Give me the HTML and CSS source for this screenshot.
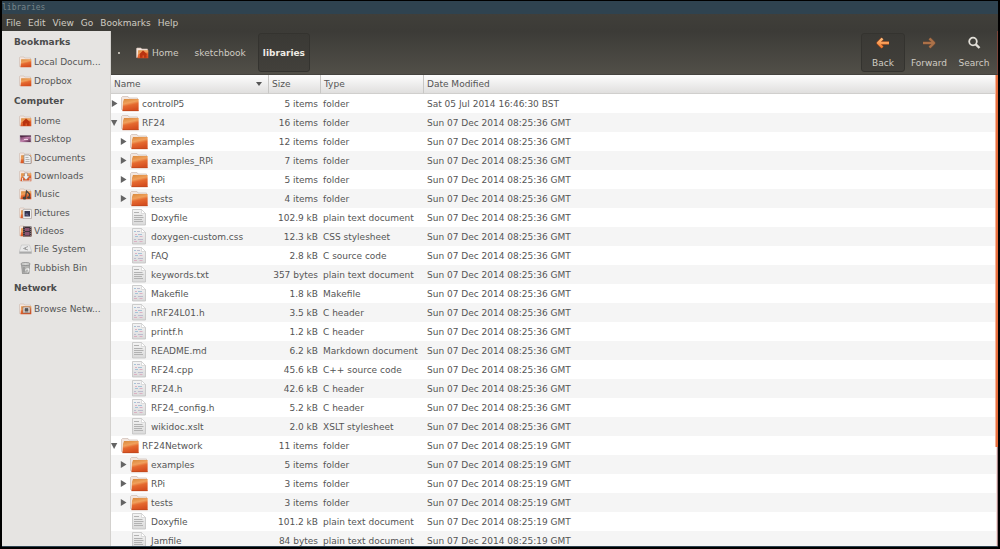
FILE: index.html
```html
<!DOCTYPE html>
<html lang="en">
<head>
<meta charset="utf-8">
<title>libraries</title>
<link rel="stylesheet" href="styles.css">
</head>
<body>
<svg class="defs" aria-hidden="true">
  <defs>
    <linearGradient id="orange" x1="0" y1="0" x2="0.3" y2="1"><stop offset="0" stop-color="#d88a3c"/><stop offset="0.4" stop-color="#f0a05c"/><stop offset="0.6" stop-color="#e56a30"/><stop offset="1" stop-color="#d64f20"/></linearGradient>
    <linearGradient id="paper" x1="0" y1="0" x2="0" y2="1"><stop offset="0" stop-color="#f4f4f4"/><stop offset="1" stop-color="#dadada"/></linearGradient>
    <linearGradient id="arrow" x1="0" y1="0" x2="0" y2="1"><stop offset="0" stop-color="#ffc080"/><stop offset="1" stop-color="#f27a2c"/></linearGradient>
    <linearGradient id="dusk" x1="0" y1="0" x2="1" y2="1"><stop offset="0" stop-color="#4a1c3c"/><stop offset="0.5" stop-color="#c283ad"/><stop offset="1" stop-color="#3b1430"/></linearGradient>
  </defs>
  <symbol id="folder" viewBox="0 0 20 19">
    <path d="M1.500 15.500V3.500L2.500 2.500H8l1 1.500h8.500V15.500z" fill="#f3e6df" stroke="#cdbcb3" stroke-width=".7"/>
    <path d="M4 5H18.600V17H2.500L3 8z" fill="url(#orange)"/>
    <path d="M2.500 16.700H18.600" stroke="#b8461c" stroke-width=".7"/>
  </symbol>
  <symbol id="text" viewBox="0 0 20 19">
    <path d="M3.500 1.500H12.500L16.500 5.500V17H3.500z" fill="url(#paper)" stroke="#c2c2c2" stroke-width=".8"/>
    <path d="M12.500 1.500V5.500H16.500z" fill="#fff" stroke="#cacaca" stroke-width=".6"/>
    <path d="M5 4.500h5M5 7.500h8.500M5 9.500h9.500M5 11.500h8M5 13.500h9" stroke="#b2b2b2" stroke-width="1"/>
  </symbol>
  <symbol id="code" viewBox="0 0 20 19">
    <path d="M3.500 1.500H12.500L16.500 5.500V17H3.500z" fill="url(#paper)" stroke="#c2c2c2" stroke-width=".8"/>
    <path d="M12.500 1.500V5.500H16.500z" fill="#fff" stroke="#cacaca" stroke-width=".6"/>
    <path d="M5 4.500h2M9 7.500h4M6 9.500h3" stroke="#a6c3d8" stroke-width="1"/>
    <path d="M6 7.500h2M10.500 9.500h3M5 14.500h3M10.500 14.500h3" stroke="#dcb0c2" stroke-width="1"/>
    <path d="M8 4.500h3M5 12.500h2M9 12.500h5" stroke="#bcbccf" stroke-width="1"/>
  </symbol>
  <symbol id="small" viewBox="0 0 13 12">
    <path d="M.5 10.500V1.500L1 1H5l.7 1H11.500V10z" fill="#f5e6dd" stroke="#cdb9ae" stroke-width=".6"/>
    <path d="M2.200 3.200H12.300V11.300H1.500z" fill="url(#orange)"/>
  </symbol>
  <symbol id="home" viewBox="0 0 13 12">
    <use href="#small"/><path d="M7 3.500L11.500 7.500H10.500V10.800H8V8.500H6.500V10.800H4V7.500H3z" fill="#b8330f"/>
  </symbol>
  <symbol id="desktop" viewBox="0 0 13 12">
    <path d="M.8 2.500H12.200V9.500H.8z" fill="url(#dusk)" stroke="#e5dfe3" stroke-width=".8"/><path d="M1 3H12" stroke="#32132a"/><path d="M5 6.500h4" stroke="#f0cfe2"/>
  </symbol>
  <symbol id="documents" viewBox="0 0 13 12">
    <use href="#small"/><path d="M5 3h5l2 2v6.500H5z" fill="#eee" stroke="#8b8b8b" stroke-width=".7"/><path d="M6.500 5.500h3M6.500 7.500h4M6.500 9.500h4" stroke="#999" stroke-width=".7"/>
  </symbol>
  <symbol id="downloads" viewBox="0 0 13 12">
    <use href="#small"/><path d="M5.500 3h3v3h2L7 10 3.500 6h2z" fill="#f2f2f2" stroke="#8a7268" stroke-width=".5"/><path d="M3.500 8v3h7.500V8" fill="none" stroke="#ddd"/>
  </symbol>
  <symbol id="music" viewBox="0 0 13 12">
    <use href="#small"/><path d="M6.500 9.500L7.500 3L10.500 6V8.500" fill="none" stroke="#44423e" stroke-width="1.300"/><ellipse cx="5.500" cy="10" rx="1.900" ry="1.500" fill="#44423e"/><ellipse cx="9.800" cy="9.500" rx="1.600" ry="1.300" fill="#44423e"/>
  </symbol>
  <symbol id="pictures" viewBox="0 0 13 12">
    <use href="#small"/><path d="M4 2.500h8.500v9H4z" fill="#eee" stroke="#999" stroke-width=".5"/><path d="M5.500 4H11v5.500H5.500z" fill="#34344d"/><path d="M6 8l2-2 2 3z" fill="#66668b"/>
  </symbol>
  <symbol id="videos" viewBox="0 0 13 12">
    <use href="#small"/><path d="M4 1.500h8.500v10H4z" fill="#3c3036"/><path d="M6 3h4.500v3H6zM6 7h4.500v3.500H6z" fill="#8a536f"/><path d="M5 2v9M11.600 2v9" stroke="#bcaeb3" stroke-width=".6" stroke-dasharray="1 1"/>
  </symbol>
  <symbol id="drive" viewBox="0 0 13 12">
    <path d="M2.500 2H10.500L12.500 8V10.500H.5V8z" fill="#e9e9e9" stroke="#c0c0c0" stroke-width=".6"/><path d="M.5 8.500h12v2H.5z" fill="#aaa"/><path d="M9 3.500L4.500 5.500 9 7M6.500 4.500v2" fill="none" stroke="#8f8f8f" stroke-width=".8"/>
  </symbol>
  <symbol id="bin" viewBox="0 0 13 12">
    <path d="M2.500 2.500h8L10 11.700H3.500z" fill="#b4b4b2" stroke="#777" stroke-width=".6"/><ellipse cx="6.500" cy="2" rx="4.700" ry="1.500" fill="#d6d6d4" stroke="#777" stroke-width=".7"/><path d="M5 5v5.500" stroke="#858585"/><path d="M6.500 8.500a1.600 1.600 0 1 1 2 1.500M9 6l1 2" stroke="#fff" fill="none" stroke-width=".8"/>
  </symbol>
  <symbol id="network" viewBox="0 0 13 12">
    <use href="#small"/><path d="M4 4h7v6H4z" fill="#e7ded9" stroke="#8f6a5a" stroke-width=".6"/><path d="M6 5.500h3V8H6zM5.500 9h4" fill="#555" stroke="#555" stroke-width=".7"/>
  </symbol>
  <symbol id="closed" viewBox="0 0 9 9"><path d="M.8 1L6.500 4.500L.8 8z" fill="#646464"/></symbol>
  <symbol id="opened" viewBox="0 0 9 9"><path d="M0 2H6.300L3.100 8z" fill="#646464"/></symbol>
</svg>

<div class="window">
  <header class="titlebar">libraries</header>
  <nav class="menubar" aria-label="Menu">
    <button>File</button><button>Edit</button><button>View</button><button>Go</button><button>Bookmarks</button><button>Help</button>
  </nav>
  <div class="content">
    <aside class="sidebar">
      <h2>Bookmarks</h2>
      <ul class="places places-bookmarks">
        <li><a href="#"><svg><use href="#small"/></svg><span>Local Docum...</span></a></li>
        <li><a href="#"><svg><use href="#small"/></svg><span>Dropbox</span></a></li>
      </ul>
      <h2>Computer</h2>
      <ul class="places places-computer">
        <li><a href="#"><svg><use href="#home"/></svg><span>Home</span></a></li>
        <li><a href="#"><svg><use href="#desktop"/></svg><span>Desktop</span></a></li>
        <li><a href="#"><svg><use href="#documents"/></svg><span>Documents</span></a></li>
        <li><a href="#"><svg><use href="#downloads"/></svg><span>Downloads</span></a></li>
        <li><a href="#"><svg><use href="#music"/></svg><span>Music</span></a></li>
        <li><a href="#"><svg><use href="#pictures"/></svg><span>Pictures</span></a></li>
        <li><a href="#"><svg><use href="#videos"/></svg><span>Videos</span></a></li>
        <li><a href="#"><svg><use href="#drive"/></svg><span>File System</span></a></li>
        <li><a href="#"><svg><use href="#bin"/></svg><span>Rubbish Bin</span></a></li>
      </ul>
      <h2>Network</h2>
      <ul class="places places-network">
        <li><a href="#"><svg><use href="#network"/></svg><span>Browse Netw...</span></a></li>
      </ul>
    </aside>
    <main class="browser">
      <div class="toolbar">
        <nav class="path" aria-label="Path">
          <button class="path-scroll" aria-label="Earlier folders"><i></i></button>
          <button class="path-home"><svg><use href="#home"/></svg>Home</button>
          <button class="path-step">sketchbook</button>
          <button class="path-current">libraries</button>
        </nav>
        <div class="actions">
          <button class="action action-raised"><svg viewBox="0 0 16 16"><path d="M7.500 3.500L3 8l4.500 4.500M3.500 8H14" fill="none" stroke="#8f421c" stroke-width="3.600" stroke-linejoin="round"/><path d="M7.500 3.500L3 8l4.500 4.500M3.500 7.990L14 8.010" fill="none" stroke="url(#arrow)" stroke-width="2.400" stroke-linejoin="round"/></svg>Back</button>
          <button class="action action-forward"><svg viewBox="0 0 16 16"><path d="M8.500 3.500L13 8l-4.500 4.500M12.500 8H2" fill="none" stroke="#684a37" stroke-width="3.400" stroke-linejoin="round"/><path d="M8.500 3.500L13 8l-4.500 4.500M12.500 8H2" fill="none" stroke="#ab7148" stroke-width="2.200" stroke-linejoin="round"/></svg>Forward</button>
          <button class="action action-search"><svg viewBox="0 0 16 16"><circle cx="7" cy="6.500" r="3.800" fill="none" stroke="#e2dfd8" stroke-width="1.800"/><path d="M9.800 9.300L13.500 13" stroke="#e2dfd8" stroke-width="2.400"/></svg>Search</button>
        </div>
      </div>
      <div class="list">
        <table>
          <colgroup><col class="col-name"><col class="col-size"><col class="col-type"><col></colgroup>
          <thead><tr><th><button>Name<i class="sort"></i></button></th><th><button>Size</button></th><th><button>Type</button></th><th><button>Date Modified</button></th></tr></thead>
          <tbody>
            <tr><td><div class="name"><button aria-label="Expand"><svg><use href="#closed"/></svg></button><svg><use href="#folder"/></svg>controlP5</div></td><td>5 items</td><td>folder</td><td>Sat 05 Jul 2014 16:46:30 BST</td></tr>
            <tr><td><div class="name"><button aria-label="Collapse"><svg><use href="#opened"/></svg></button><svg><use href="#folder"/></svg>RF24</div></td><td>16 items</td><td>folder</td><td>Sun 07 Dec 2014 08:25:36 GMT</td></tr>
            <tr><td><div class="name nested"><button aria-label="Expand"><svg><use href="#closed"/></svg></button><svg><use href="#folder"/></svg>examples</div></td><td>12 items</td><td>folder</td><td>Sun 07 Dec 2014 08:25:36 GMT</td></tr>
            <tr><td><div class="name nested"><button aria-label="Expand"><svg><use href="#closed"/></svg></button><svg><use href="#folder"/></svg>examples_RPi</div></td><td>7 items</td><td>folder</td><td>Sun 07 Dec 2014 08:25:36 GMT</td></tr>
            <tr><td><div class="name nested"><button aria-label="Expand"><svg><use href="#closed"/></svg></button><svg><use href="#folder"/></svg>RPi</div></td><td>5 items</td><td>folder</td><td>Sun 07 Dec 2014 08:25:36 GMT</td></tr>
            <tr><td><div class="name nested"><button aria-label="Expand"><svg><use href="#closed"/></svg></button><svg><use href="#folder"/></svg>tests</div></td><td>4 items</td><td>folder</td><td>Sun 07 Dec 2014 08:25:36 GMT</td></tr>
            <tr><td><div class="name file"><svg><use href="#text"/></svg>Doxyfile</div></td><td>102.9 kB</td><td>plain text document</td><td>Sun 07 Dec 2014 08:25:36 GMT</td></tr>
            <tr><td><div class="name file"><svg><use href="#code"/></svg>doxygen-custom.css</div></td><td>12.3 kB</td><td>CSS stylesheet</td><td>Sun 07 Dec 2014 08:25:36 GMT</td></tr>
            <tr><td><div class="name file"><svg><use href="#code"/></svg>FAQ</div></td><td>2.8 kB</td><td>C source code</td><td>Sun 07 Dec 2014 08:25:36 GMT</td></tr>
            <tr><td><div class="name file"><svg><use href="#text"/></svg>keywords.txt</div></td><td>357 bytes</td><td>plain text document</td><td>Sun 07 Dec 2014 08:25:36 GMT</td></tr>
            <tr><td><div class="name file"><svg><use href="#code"/></svg>Makefile</div></td><td>1.8 kB</td><td>Makefile</td><td>Sun 07 Dec 2014 08:25:36 GMT</td></tr>
            <tr><td><div class="name file"><svg><use href="#code"/></svg>nRF24L01.h</div></td><td>3.5 kB</td><td>C header</td><td>Sun 07 Dec 2014 08:25:36 GMT</td></tr>
            <tr><td><div class="name file"><svg><use href="#code"/></svg>printf.h</div></td><td>1.2 kB</td><td>C header</td><td>Sun 07 Dec 2014 08:25:36 GMT</td></tr>
            <tr><td><div class="name file"><svg><use href="#text"/></svg>README.md</div></td><td>6.2 kB</td><td>Markdown document</td><td>Sun 07 Dec 2014 08:25:36 GMT</td></tr>
            <tr><td><div class="name file"><svg><use href="#code"/></svg>RF24.cpp</div></td><td>45.6 kB</td><td>C++ source code</td><td>Sun 07 Dec 2014 08:25:36 GMT</td></tr>
            <tr><td><div class="name file"><svg><use href="#code"/></svg>RF24.h</div></td><td>42.6 kB</td><td>C header</td><td>Sun 07 Dec 2014 08:25:36 GMT</td></tr>
            <tr><td><div class="name file"><svg><use href="#code"/></svg>RF24_config.h</div></td><td>5.2 kB</td><td>C header</td><td>Sun 07 Dec 2014 08:25:36 GMT</td></tr>
            <tr><td><div class="name file"><svg><use href="#text"/></svg>wikidoc.xslt</div></td><td>2.0 kB</td><td>XSLT stylesheet</td><td>Sun 07 Dec 2014 08:25:36 GMT</td></tr>
            <tr><td><div class="name"><button aria-label="Collapse"><svg><use href="#opened"/></svg></button><svg><use href="#folder"/></svg>RF24Network</div></td><td>11 items</td><td>folder</td><td>Sun 07 Dec 2014 08:25:19 GMT</td></tr>
            <tr><td><div class="name nested"><button aria-label="Expand"><svg><use href="#closed"/></svg></button><svg><use href="#folder"/></svg>examples</div></td><td>5 items</td><td>folder</td><td>Sun 07 Dec 2014 08:25:19 GMT</td></tr>
            <tr><td><div class="name nested"><button aria-label="Expand"><svg><use href="#closed"/></svg></button><svg><use href="#folder"/></svg>RPi</div></td><td>3 items</td><td>folder</td><td>Sun 07 Dec 2014 08:25:19 GMT</td></tr>
            <tr><td><div class="name nested"><button aria-label="Expand"><svg><use href="#closed"/></svg></button><svg><use href="#folder"/></svg>tests</div></td><td>3 items</td><td>folder</td><td>Sun 07 Dec 2014 08:25:19 GMT</td></tr>
            <tr><td><div class="name file"><svg><use href="#text"/></svg>Doxyfile</div></td><td>101.2 kB</td><td>plain text document</td><td>Sun 07 Dec 2014 08:25:19 GMT</td></tr>
            <tr><td><div class="name file"><svg><use href="#text"/></svg>Jamfile</div></td><td>84 bytes</td><td>plain text document</td><td>Sun 07 Dec 2014 08:25:19 GMT</td></tr>
          </tbody>
        </table>
        <div class="scroll"><div class="scroll-thumb"></div></div>
      </div>
    </main>
  </div>
</div>
</body>
</html>
```
FILE: styles.css
```css
* { box-sizing: border-box; }
body {
  margin: 0;
  height: 100vh;
  padding: 1px 2px 2px;
  overflow: hidden;
  background: #000;
  color: #555;
  font: 9px/12px "DejaVu Sans", sans-serif;
}
button {
  margin: 0;
  padding: 0;
  border: 0;
  background: none;
  color: inherit;
  font: inherit;
}
.defs { position: absolute; width: 0; height: 0; }
.window {
  display: flex;
  flex-direction: column;
  height: 100%;
  border-bottom: 1px solid #2f4350;
  background: #3c3b37;
}
.titlebar {
  flex: none;
  height: 13px;
  background: #2f4350;
  color: #77858a;
  font: 8px/13px "DejaVu Sans Mono", monospace;
}
.menubar {
  display: flex;
  flex: none;
  gap: 7px;
  height: 17px;
  padding-left: 4px;
  background: linear-gradient(#403f3a, #3c3b37);
  color: #d0ccc3;
}
.content { display: flex; flex: 1; min-height: 0; }

.sidebar {
  flex: none;
  width: 109px;
  border-right: 1px solid #d3d1ce;
  background: #e6e4e2;
}
.sidebar h2 {
  margin: 0;
  padding-left: 12px;
  color: #4c4c4c;
  font-size: 9px;
  line-height: 22px;
}
.places { display: grid; grid-auto-rows: 1fr; margin: 0; padding: 0; list-style: none; }
.places-bookmarks { height: 37px; }
.places-computer { height: 165px; }
.places-network { height: 19px; }
.places a {
  display: flex;
  align-items: center;
  gap: 2px;
  height: 100%;
  padding-left: 17px;
  color: #555;
  text-decoration: none;
  white-space: nowrap;
}
.places svg, .path svg { flex: none; width: 13px; height: 12px; }

.browser { display: flex; flex: 1; flex-direction: column; min-width: 0; }
.toolbar {
  display: flex;
  flex: none;
  justify-content: space-between;
  height: 44px;
  padding: 2px 2px 2px 0;
  border-right: 1px solid #7c453a;
  border-bottom: 1px solid #45433e;
  background: linear-gradient(#3c3b37, #514f48);
  color: #d0ccc3;
}
.path { display: flex; gap: 2px; }
.path-scroll { width: 16px; }
.path-scroll i { display: block; width: 2px; height: 2px; margin: auto; background: #b8b4ab; }
.path-home { display: flex; align-items: center; gap: 3px; padding: 0 7px; }
.path-step { padding: 0 7px; }
.path-current, .action-raised {
  border: 1px solid #34332f;
  border-radius: 3px;
  background: linear-gradient(#3a3935, #42403b);
}
.path-current { margin-left: 3px; padding: 0 4px; color: #eeebe4; font-weight: bold; }
.actions { display: flex; gap: 3px; }
.action {
  display: flex;
  flex-direction: column;
  align-items: center;
  justify-content: space-between;
  min-width: 42px;
  border: 1px solid transparent;
  padding: 1px 0 2px;
}
.action-raised { width: 44px; border-color: #34332f; }
.action svg { width: 16px; height: 16px; }

.list { position: relative; flex: 1; min-height: 0; overflow: hidden; background: #fff; }
table { width: 100%; border-collapse: separate; border-spacing: 0; table-layout: fixed; }
.col-name { width: 158px; }
.col-size { width: 52px; }
.col-type { width: 103px; }
th, td { height: 19px; padding: 0; text-align: left; white-space: nowrap; }
th {
  border-right: 1px solid #c8c7c5;
  border-bottom: 1px solid #d0cfcd;
  background: linear-gradient(#fdfdfd, #e0dfde);
  font-weight: normal;
}
th:last-child { border-right: 0; }
th button { display: flex; align-items: center; width: 100%; padding: 0 6px 0 3px; }
.sort {
  margin-left: auto;
  border: 3px solid transparent;
  border-top: 4px solid #555;
  border-bottom: 0;
}
td:nth-child(2) { padding-right: 3px; text-align: right; }
td:nth-child(3) { padding-left: 2px; }
td:nth-child(4) { padding-left: 3px; }
tbody tr:nth-child(even) { background: #f5f5f5; }
.name { display: flex; align-items: center; height: 19px; }
.name > svg { width: 20px; height: 19px; margin-right: 2px; }
.name button { width: 9px; height: 9px; }
.name button svg { display: block; width: 9px; height: 9px; }
.nested { padding-left: 9px; }
.file { padding-left: 18px; }
.scroll { position: absolute; top: 0; right: 0; bottom: 0; width: 2px; border-right: 1px solid #a08084; background: #f4dcd8; }
.scroll-thumb { position: absolute; right: -1px; width: 3px; height: 79%; border-left: 1px solid #f3b49c; background: #e9703f; }
```
